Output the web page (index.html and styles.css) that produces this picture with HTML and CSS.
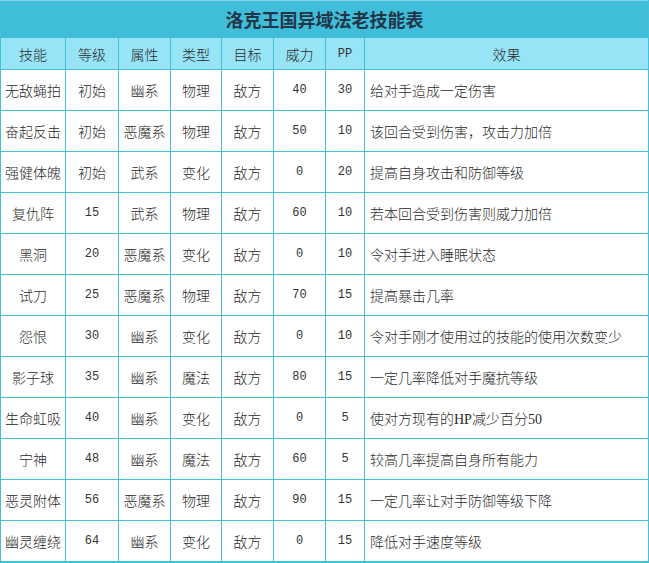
FILE: index.html
```html
<!DOCTYPE html>
<html lang="zh">
<head>
<meta charset="utf-8">
<title>洛克王国异域法老技能表</title>
<link rel="stylesheet" href="styles.css">
</head>
<body>
<table class="skills">
  <colgroup>
    <col class="c1"><col class="c2"><col class="c3"><col class="c4"><col class="c5"><col class="c6"><col class="c7"><col class="c8">
  </colgroup>
  <thead>
    <tr class="title"><th colspan="8">洛克王国异域法老技能表</th></tr>
    <tr class="head">
      <th>技能</th><th>等级</th><th>属性</th><th>类型</th><th>目标</th><th>威力</th><th class="num">PP</th><th>效果</th>
    </tr>
  </thead>
  <tbody>
    <tr><td>无敌蝇拍</td><td>初始</td><td>幽系</td><td>物理</td><td>敌方</td><td class="num">40</td><td class="num">30</td><td class="eff">给对手造成一定伤害</td></tr>
    <tr><td>奋起反击</td><td>初始</td><td>恶魔系</td><td>物理</td><td>敌方</td><td class="num">50</td><td class="num">10</td><td class="eff">该回合受到伤害，攻击力加倍</td></tr>
    <tr><td>强健体魄</td><td>初始</td><td>武系</td><td>变化</td><td>敌方</td><td class="num">0</td><td class="num">20</td><td class="eff">提高自身攻击和防御等级</td></tr>
    <tr><td>复仇阵</td><td class="num">15</td><td>武系</td><td>物理</td><td>敌方</td><td class="num">60</td><td class="num">10</td><td class="eff">若本回合受到伤害则威力加倍</td></tr>
    <tr><td>黑洞</td><td class="num">20</td><td>恶魔系</td><td>变化</td><td>敌方</td><td class="num">0</td><td class="num">10</td><td class="eff">令对手进入睡眠状态</td></tr>
    <tr><td>试刀</td><td class="num">25</td><td>恶魔系</td><td>物理</td><td>敌方</td><td class="num">70</td><td class="num">15</td><td class="eff">提高暴击几率</td></tr>
    <tr><td>怨恨</td><td class="num">30</td><td>幽系</td><td>变化</td><td>敌方</td><td class="num">0</td><td class="num">10</td><td class="eff">令对手刚才使用过的技能的使用次数变少</td></tr>
    <tr><td>影子球</td><td class="num">35</td><td>幽系</td><td>魔法</td><td>敌方</td><td class="num">80</td><td class="num">15</td><td class="eff">一定几率降低对手魔抗等级</td></tr>
    <tr><td>生命虹吸</td><td class="num">40</td><td>幽系</td><td>变化</td><td>敌方</td><td class="num">0</td><td class="num">5</td><td class="eff">使对方现有的<span class="lat">HP</span>减少百分<span class="lat">50</span></td></tr>
    <tr><td>宁神</td><td class="num">48</td><td>幽系</td><td>魔法</td><td>敌方</td><td class="num">60</td><td class="num">5</td><td class="eff">较高几率提高自身所有能力</td></tr>
    <tr><td>恶灵附体</td><td class="num">56</td><td>恶魔系</td><td>物理</td><td>敌方</td><td class="num">90</td><td class="num">15</td><td class="eff">一定几率让对手防御等级下降</td></tr>
    <tr><td>幽灵缠绕</td><td class="num">64</td><td>幽系</td><td>变化</td><td>敌方</td><td class="num">0</td><td class="num">15</td><td class="eff">降低对手速度等级</td></tr>
  </tbody>
</table>
</body>
</html>
```
FILE: styles.css
```css
html, body {
  margin: 0;
  padding: 0;
  background: #ffffff;
}

.skills {
  border-collapse: collapse;
  table-layout: fixed;
  width: 648px;
  font-family: "Noto Sans CJK SC", "Noto Sans", sans-serif;
  font-size: 14px;
  font-weight: 300;
  color: #2a2a2a;
  border-bottom: 2px solid #43bfd7;
}

.c1 { width: 65px; }
.c2 { width: 53px; }
.c3 { width: 52px; }
.c4 { width: 51px; }
.c5 { width: 52px; }
.c6 { width: 52px; }
.c7 { width: 39px; }
.c8 { width: 284px; }

.skills th,
.skills td {
  border: 1px solid #43bfd7;
  padding: 0;
  text-align: center;
  font-weight: 300;
  white-space: nowrap;
  overflow: hidden;
}

.title th {
  background: #40bed9;
  height: 36px;
  font-size: 18px;
  font-weight: bold;
  color: #22364a;
  border-top: 1px solid #7fd3e6;
}

.head th {
  background: #97e4f6;
  height: 31px;
  color: #2a2a2a;
}

.skills tbody td {
  height: 40px;
}

.skills .num {
  font-family: "Liberation Mono", "DejaVu Sans Mono", monospace;
  font-size: 12px;
  color: #333333;
}

.skills td.eff {
  text-align: left;
  padding-left: 5px;
}

.lat {
  font-family: "Liberation Serif", serif;
}
```
